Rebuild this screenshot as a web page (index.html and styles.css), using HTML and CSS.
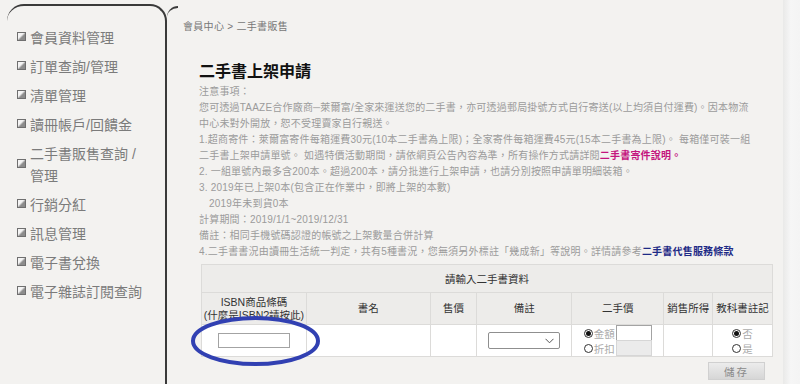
FILE: index.html
```html
<!DOCTYPE html>
<html lang="zh-Hant">
<head>
    <meta charset="UTF-8">
    <meta name="viewport" content="width=device-width, initial-scale=1.0">
    <title>二手書上架申請</title>
    <link rel="stylesheet" href="styles.css">
</head>
<body>
<div class="page">

    <!-- 左側選單 -->
    <div class="sidebar">
        <ul class="menu">
            <li>會員資料管理</li>
            <li>訂單查詢/管理</li>
            <li>清單管理</li>
            <li>讀冊帳戶/回饋金</li>
            <li>二手書販售查詢 / 管理</li>
            <li>行銷分紅</li>
            <li>訊息管理</li>
            <li>電子書兌換</li>
            <li>電子雜誌訂閱查詢</li>
        </ul>
    </div>

    <!-- 主要內容 -->
    <div class="main">
        <div class="crumb">會員中心 &gt; 二手書販售</div>

        <div class="apply">
            <h1>二手書上架申請</h1>

            <div class="notes">
                <p>注意事項：</p>
                <p>您可透過TAAZE合作廠商─萊爾富/全家來運送您的二手書，亦可透過郵局掛號方式自行寄送(以上均須自付運費)。因本物流<br>中心未對外開放，恕不受理賣家自行親送。</p>
                <p>1.超商寄件：萊爾富寄件每箱運費30元(10本二手書為上限)；全家寄件每箱運費45元(15本二手書為上限)。 每箱僅可裝一組<br>二手書上架申請單號。 如遇特價活動期間，請依網頁公告內容為準，所有操作方式請詳閱<a class="pink" href="#">二手書寄件說明。</a></p>
                <p>2. 一組單號內最多含200本。超過200本，請分批進行上架申請，也請分別按照申請單明細裝箱。</p>
                <p>3. 2019年已上架0本(包含正在作業中，即將上架的本數)</p>
                <p class="indent">2019年未到貨0本</p>
                <p>計算期間：2019/1/1~2019/12/31</p>
                <p>備註：相同手機號碼認證的帳號之上架數量合併計算</p>
                <p>4.二手書書況由讀冊生活統一判定，共有5種書況，您無須另外標註「幾成新」等說明。詳情請參考<a class="navy" href="#">二手書代售服務條款</a></p>
            </div>

            <div class="table-wrap">
                <table class="form-table">
                    <tr class="head">
                        <th colspan="7">請輸入二手書資料</th>
                    </tr>
                    <tr class="head cols">
                        <th class="c-isbn">ISBN商品條碼<br>(什麼是ISBN?請按此)</th>
                        <th class="c-name">書名</th>
                        <th class="c-list">售價</th>
                        <th class="c-note">備註</th>
                        <th class="c-price">二手價</th>
                        <th class="c-earn">銷售所得</th>
                        <th class="c-text">教科書註記</th>
                    </tr>
                    <tr class="row">
                        <td><input type="text" class="isbn-input"></td>
                        <td></td>
                        <td></td>
                        <td>
                            <span class="select-box">
                                <select class="note-select"><option></option></select>
                                <svg class="chev" width="9" height="6" viewBox="0 0 9 6"><path d="M0.5 0.8 L4.5 4.8 L8.5 0.8" fill="none" stroke="#555" stroke-width="1"/></svg>
                            </span>
                        </td>
                        <td>
                            <div class="price-opts">
                                <label class="opt"><input type="radio" name="ptype" checked><span>金額</span><input type="text" class="small-input"></label>
                                <label class="opt"><input type="radio" name="ptype"><span>折扣</span><input type="text" class="small-input" disabled></label>
                            </div>
                        </td>
                        <td></td>
                        <td>
                            <div class="yesno">
                                <label class="opt"><input type="radio" name="tb" checked><span>否</span></label>
                                <label class="opt"><input type="radio" name="tb"><span>是</span></label>
                            </div>
                        </td>
                    </tr>
                </table>

                <!-- 藍色圈選標記 -->
                <svg class="mark" width="134" height="54" viewBox="0 0 134 54">
                    <ellipse cx="66.5" cy="27" rx="62.5" ry="23" fill="none" stroke="#3140b2" stroke-width="4"/>
                </svg>
            </div>

            <div class="actions">
                <button class="save-btn">儲存</button>
            </div>
        </div>
    </div>

    <div class="edge"></div>
</div>
</body>
</html>
```

FILE: styles.css
```css
* {
    margin: 0;
    padding: 0;
    box-sizing: border-box;
}

body {
    background-color: #f3f2f0;
    font-family: "Liberation Sans", "Noto Sans CJK TC", sans-serif;
    color: #333;
}

.page {
    display: flex;
    height: 100vh;
    overflow: hidden;
}

/* 左側選單 */
.sidebar {
    flex: 0 0 160px;
    margin: 4px 0 0 7px;
    padding-top: 21px;
    border-top: 2px solid #3a3a3a;
    border-right: 2px solid #3a3a3a;
    border-radius: 17px 17px 0 0;
}

.menu {
    list-style: none;
}

.menu li {
    position: relative;
    padding: 0 15px 0 23px;
    margin-bottom: 7px;
    font-size: 14px;
    line-height: 22px;
    color: #7b7b7b;
}

.menu li::before {
    content: "";
    position: absolute;
    left: 10px;
    top: calc(50% - 6px);
    width: 7px;
    height: 7px;
    border: 1px solid #6f6f6f;
    background: linear-gradient(135deg, #f4f4f4 40%, #8c8c8c 60%);
}

/* 主要內容 */
.main {
    flex: 1;
    position: relative;
    padding: 20px 0 0 16px;
}

.main::before {
    content: "";
    position: absolute;
    left: 0;
    top: 6px;
    width: 11px;
    height: 11px;
    border-top: 2px solid #3a3a3a;
    border-top-left-radius: 11px;
}

.crumb {
    font-size: 10px;
    line-height: 14px;
    letter-spacing: 0.3px;
    color: #777;
}

.apply {
    margin: 26px 0 0 16px;
    width: 580px;
}

h1 {
    font-size: 16px;
    line-height: 24px;
    font-weight: bold;
    color: #111;
}

.notes {
    font-size: 10px;
    line-height: 16px;
    letter-spacing: 0.2px;
    color: #9b9b9b;
    white-space: nowrap;
}

.notes .indent {
    padding-left: 10px;
}

.notes a {
    text-decoration: none;
    font-weight: bold;
}

.pink {
    color: #c4147e;
}

.navy {
    color: #1d2a86;
}

/* 表格 */
.table-wrap {
    position: relative;
    margin: 4px 0 0 2px;
    width: 572px;
}

.form-table {
    width: 572px;
    border-collapse: collapse;
    font-size: 10.5px;
    color: #333;
}

.form-table th,
.form-table td {
    border: 1px solid #dcdbd9;
    text-align: center;
    font-weight: normal;
    padding: 0;
}

.form-table .head th {
    background-color: #edecea;
    height: 28px;
}

.form-table .cols th {
    height: 32px;
    line-height: 13px;
}

.c-isbn { width: 105px; }
.c-name { width: 124px; }
.c-list { width: 47px; }
.c-note { width: 95px; }
.c-price { width: 92px; }
.c-earn { width: 49px; }
.c-text { width: 60px; }

.form-table .row td {
    background-color: #ffffff;
    height: 32px;
}

.isbn-input {
    width: 72px;
    height: 15px;
    border: 1px solid #a3a3a3;
    background: #fff;
    vertical-align: middle;
}

.select-box {
    position: relative;
    display: inline-block;
    vertical-align: middle;
}

.note-select {
    appearance: none;
    display: block;
    width: 72px;
    height: 17px;
    border: 1px solid #8f8f8f;
    border-radius: 2px;
    background: #fff;
    font-size: 10px;
}

.chev {
    position: absolute;
    right: 6px;
    top: 6px;
}

.price-opts,
.yesno {
    display: flex;
    flex-direction: column;
    align-items: center;
}

.opt {
    display: flex;
    align-items: center;
    height: 15px;
    font-size: 10.5px;
    color: #ababab;
}

.opt input[type="radio"] {
    appearance: none;
    width: 9px;
    height: 9px;
    border: 1px solid #333;
    border-radius: 50%;
    background: #fff;
    margin-right: 1px;
    position: relative;
}

.opt input[type="radio"]:checked::after {
    content: "";
    position: absolute;
    left: 1px;
    top: 1px;
    width: 5px;
    height: 5px;
    border-radius: 50%;
    background: #111;
}

.small-input {
    width: 36px;
    height: 16px;
    margin-left: 1px;
    border: 1px solid #a3a3a3;
    background: #fff;
}

.small-input:disabled {
    background: #ebebeb;
    border-color: #d6d6d6;
}

.mark {
    position: absolute;
    left: -12px;
    top: 50px;
}

.actions {
    display: flex;
    justify-content: flex-end;
    width: 572px;
    margin: 5px 0 0 2px;
    padding-right: 8px;
}

.save-btn {
    width: 57px;
    height: 18px;
    border: 1px solid #d0d0d0;
    background: linear-gradient(#ececec, #d6d6d6);
    color: #8a8a8a;
    font-family: "Liberation Sans", "Noto Sans CJK TC", sans-serif;
    font-size: 10.5px;
    letter-spacing: 2px;
}

/* 右側邊緣 */
.edge {
    flex: 0 0 17px;
    background: linear-gradient(to right, #e9e9e8, #f6f6f6 45%, #f4f4f4);
}
```
